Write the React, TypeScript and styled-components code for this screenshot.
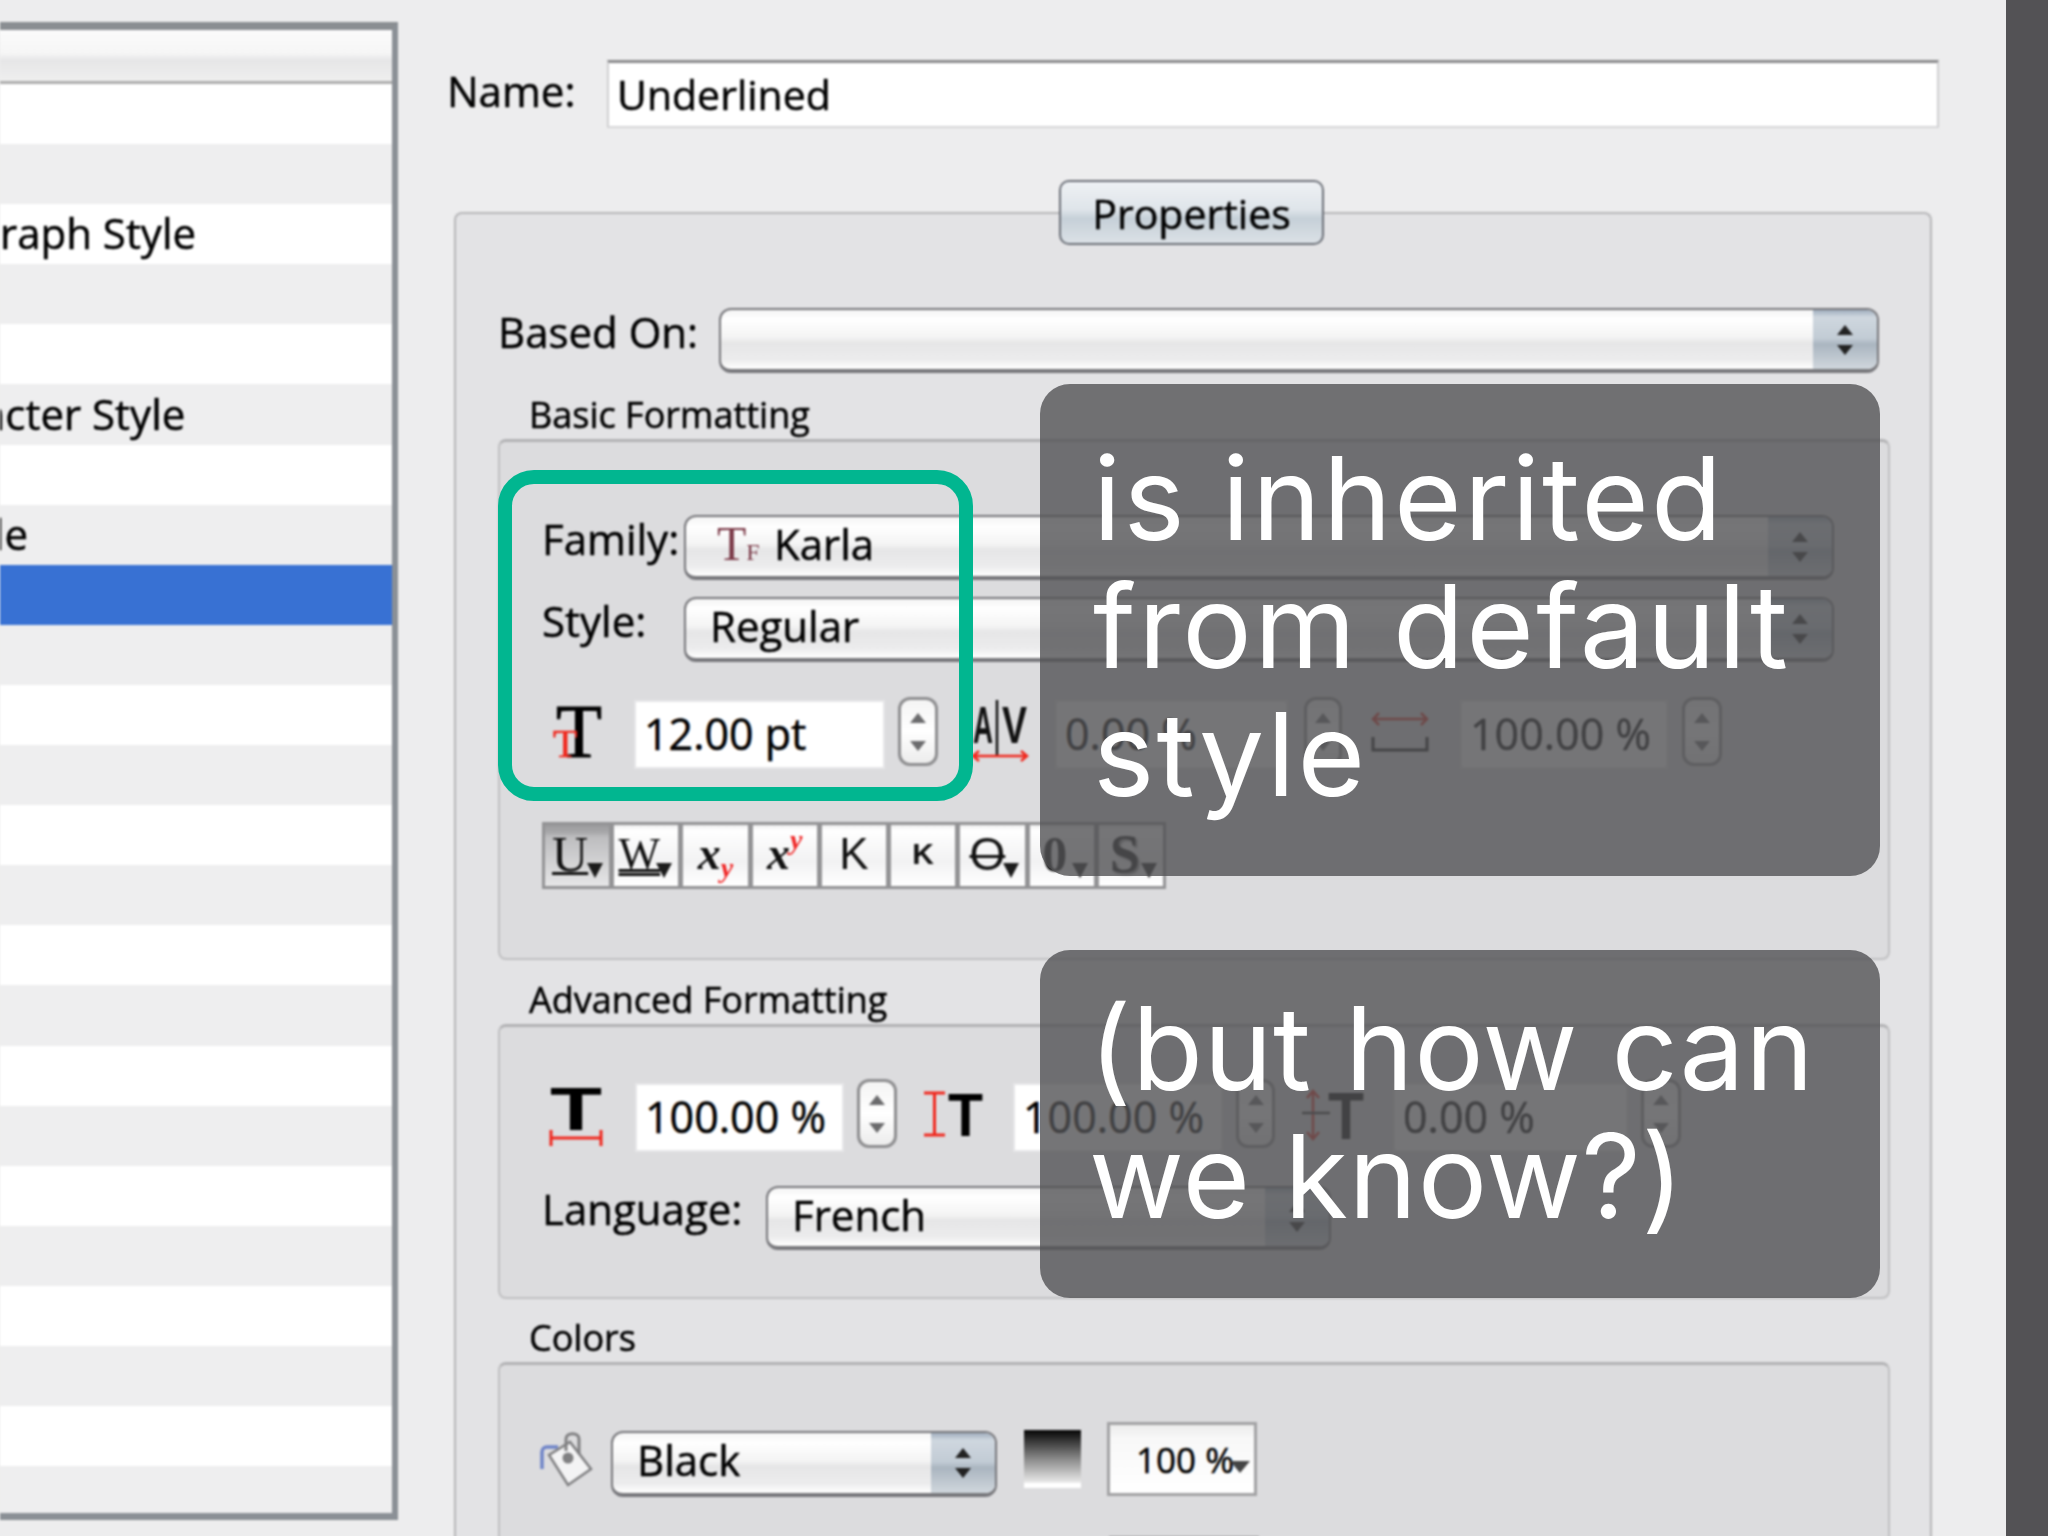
import React from 'react';
import styled, { createGlobalStyle } from 'styled-components';

const GlobalStyle = createGlobalStyle`
    html, body {
        margin: 0;
        padding: 0;
        background: #ededee;
    }
    * {
        box-sizing: border-box;
    }
`;

const Page = styled.div`
    position: relative;
    width: 2048px;
    height: 1536px;
    display: flex;
    overflow: hidden;
    background: #ededee;
    font-family: "Open Sans", "Noto Sans", sans-serif;
    color: #000;
`;

/* left list */

const ListPanel = styled.div`
    width: 398px;
    height: 1498px;
    margin-top: 22px;
    flex-shrink: 0;
    border-top: 8px solid #8a8e92;
    border-right: 6px solid #8b9096;
    border-bottom: 7px solid #8b9096;
    background: #fff;
    overflow: hidden;
    -webkit-text-stroke: 0.5px #000;
    filter: blur(1.1px);
`;

const ListHeader = styled.div`
    height: 54px;
    border-bottom: 3px solid #aeaeae;
    background: linear-gradient(#fbfbfb 0%, #f6f6f6 45%, #e6e6e7 60%, #efefef 100%);
`;

const ListRow = styled.div<{ $selected?: boolean; $odd?: boolean }>`
    height: 60.1px;
    display: flex;
    align-items: center;
    padding-bottom: 3px;
    font-size: 42px;
    white-space: nowrap;
    background: ${(p) => (p.$selected ? '#3871d3' : p.$odd ? '#eeeeef' : '#ffffff')};
`;

const ListText = styled.span<{ $offset?: number }>`
    margin-left: ${(p) => p.$offset ?? 0}px;
`;

/* dialog */

const Dialog = styled.div`
    width: 1608px;
    padding-left: 49px;
    display: flex;
    flex-direction: column;
    flex-shrink: 0;
    -webkit-text-stroke: 0.5px #000;
    filter: blur(1.1px);
`;

const NameRow = styled.div`
    display: flex;
    align-items: center;
    margin-top: 60px;
`;

const Label = styled.div<{ $w: number; $lift?: number }>`
    width: ${(p) => p.$w}px;
    flex-shrink: 0;
    margin-bottom: ${(p) => (p.$lift ?? 9) * 2}px;
    font-size: 42px;
    line-height: 44px;
    white-space: nowrap;
`;

const NameInput = styled.div`
    width: 1332px;
    height: 68px;
    padding: 0 0 2px 8px;
    display: flex;
    align-items: center;
    background: #fff;
    border-top: 3px solid #8b8b8d;
    border-left: 2px solid #cfcfd1;
    border-right: 2px solid #cfcfd1;
    border-bottom: 2px solid #d6d6d8;
    font-size: 41px;
`;

const PropertiesPanel = styled.div`
    width: 1478px;
    margin-top: 84px;
    margin-left: 7px;
    height: 1340px;
    flex-shrink: 0;
    background: #e3e3e5;
    border: 2px solid #b7b7b9;
    border-bottom: 0;
    border-radius: 8px 8px 0 0;
    display: flex;
    flex-direction: column;
`;

const TabRow = styled.div`
    display: flex;
    flex-shrink: 0;
    justify-content: center;
    margin-top: -34px;
    padding-right: 3px;
`;

const TabButton = styled.div`
    width: 265px;
    height: 65px;
    display: flex;
    align-items: center;
    justify-content: center;
    border: 2px solid #6c7078;
    border-radius: 10px;
    background: linear-gradient(#eef1f4 0%, #dfe5ea 45%, #c6d0d8 60%, #dbe1e6 100%);
    font-size: 41px;
`;

const BasedRow = styled.div`
    display: flex;
    flex-shrink: 0;
    align-items: center;
    margin-top: 63px;
    padding-left: 42px;
`;

const SelectBox = styled.div<{ $w: number; $h?: number }>`
    width: ${(p) => p.$w}px;
    height: ${(p) => p.$h ?? 65}px;
    flex-shrink: 0;
    display: flex;
    overflow: hidden;
    border: 2px solid #77777b;
    border-bottom: 4px solid #77777b;
    border-radius: 12px;
    background: linear-gradient(#f4f4f4 0%, #ffffff 16%, #f4f4f4 46%, #e6e6e7 56%, #ececed 84%, #ffffff 100%);
`;

const SelectValue = styled.div<{ $pad: number; $lift: number }>`
    flex: 1;
    display: flex;
    align-items: center;
    padding-left: ${(p) => p.$pad}px;
    padding-bottom: ${(p) => p.$lift}px;
    font-size: 42px;
    white-space: nowrap;
`;

const SelectArrows = styled.div`
    width: 64px;
    display: flex;
    flex-direction: column;
    align-items: center;
    justify-content: center;
    gap: 10px;
    background: linear-gradient(#9fadbd 0%, #cfd7df 12%, #c2ccd5 48%, #aab5c0 58%, #d0d7dd 100%);
`;

const Arrow = styled.span<{ $down?: boolean; $color?: string; $size?: number }>`
    width: 0;
    height: 0;
    flex-shrink: 0;
    border-left: ${(p) => p.$size ?? 8}px solid transparent;
    border-right: ${(p) => p.$size ?? 8}px solid transparent;
    border-${(p) => (p.$down ? 'top' : 'bottom')}: ${(p) => (p.$size ?? 8) + 2}px solid ${(p) => p.$color ?? '#222'};
`;

const SectionLabel = styled.div<{ $mt: number }>`
    height: 45px;
    flex-shrink: 0;
    margin-top: ${(p) => p.$mt}px;
    padding-left: 73px;
    font-size: 36px;
    line-height: 41px;
    white-space: nowrap;
`;

const Group = styled.div<{ $h: number; $pt: number }>`
    width: 1392px;
    height: ${(p) => p.$h}px;
    margin-left: 42px;
    padding-top: ${(p) => p.$pt}px;
    flex-shrink: 0;
    background: #dcdcde;
    border: 2px solid #c0c0c2;
    border-top: 3px solid #b2b2b4;
    border-radius: 8px;
    display: flex;
    flex-direction: column;
`;

const FieldRow = styled.div<{ $mt?: number; $pl?: number }>`
    display: flex;
    flex-shrink: 0;
    align-items: center;
    margin-top: ${(p) => p.$mt ?? 0}px;
    padding-left: ${(p) => p.$pl ?? 42}px;
`;

const MetricRow = styled.div<{ $mt?: number }>`
    display: flex;
    flex-shrink: 0;
    align-items: flex-start;
    margin-top: ${(p) => p.$mt ?? 0}px;
`;

const Slot = styled.div<{ $ml: number; $mt?: number; $w: number; $h: number }>`
    margin-left: ${(p) => p.$ml}px;
    margin-top: ${(p) => p.$mt ?? 0}px;
    width: ${(p) => p.$w}px;
    height: ${(p) => p.$h}px;
    flex-shrink: 0;
    svg {
        display: block;
        overflow: visible;
    }
`;

const NumberInput = styled.div<{ $ml: number; $mt?: number; $w: number }>`
    margin-left: ${(p) => p.$ml}px;
    margin-top: ${(p) => p.$mt ?? 3}px;
    width: ${(p) => p.$w}px;
    height: 69px;
    flex-shrink: 0;
    display: flex;
    align-items: center;
    padding: 0 0 3px 8px;
    background: #fff;
    border: 2px solid #e6e6e8;
    font-size: 43px;
    white-space: nowrap;
`;

const Stepper = styled.div<{ $ml: number; $w?: number }>`
    margin-left: ${(p) => p.$ml}px;
    width: ${(p) => p.$w ?? 40}px;
    height: 69px;
    flex-shrink: 0;
    display: flex;
    flex-direction: column;
    align-items: center;
    justify-content: center;
    gap: 18px;
    border: 3px solid #8e8e90;
    border-radius: 12px;
    background: linear-gradient(#f4f4f4, #ffffff 50%, #ececec);
`;

const Toolbar = styled.div`
    width: 624px;
    height: 67px;
    flex-shrink: 0;
    margin-top: 53px;
    margin-left: 42px;
    display: flex;
    border: 3px solid #939395;
    background: #939395;
    gap: 5px;
`;

const ToolButton = styled.div<{ $active?: boolean }>`
    flex: 1;
    position: relative;
    display: flex;
    align-items: center;
    justify-content: center;
    background: ${(p) =>
        p.$active
            ? 'linear-gradient(#9a9a9c 0%, #a8a8aa 12%, #bdbdbf 20%, #e6e6e7 100%)'
            : 'linear-gradient(#ececec 0%, #ffffff 8%, #f2f2f3 60%, #ffffff 100%)'};
`;

const Glyph = styled.span<{ $size: number; $serif?: boolean; $bold?: boolean; $italic?: boolean; $line?: string; $pos?: number; $shade?: boolean }>`
    position: relative;
    left: ${(p) => p.$pos ?? 0}px;
    top: -2px;
    font-family: ${(p) => (p.$serif ? '"Liberation Serif", serif' : '"Liberation Sans", sans-serif')};
    font-size: ${(p) => p.$size}px;
    line-height: 1;
    font-weight: ${(p) => (p.$bold ? 700 : 400)};
    font-style: ${(p) => (p.$italic ? 'italic' : 'normal')};
    text-decoration: ${(p) => p.$line ?? 'none'};
    text-decoration-thickness: 3px;
    text-underline-offset: 1px;
    text-shadow: ${(p) => (p.$shade ? '2px 2px 2px #777' : 'none')};
    color: #111;
    -webkit-text-stroke: 0;
`;

const RedIndex = styled.sub<{ $up?: boolean }>`
    font-family: "Liberation Serif", serif;
    font-style: italic;
    font-weight: 700;
    font-size: 28px;
    line-height: 0;
    vertical-align: ${(p) => (p.$up ? '20px' : '-8px')};
    color: #f02626;
`;

const CornerArrow = styled.span`
    position: absolute;
    right: 6px;
    bottom: 8px;
    width: 0;
    height: 0;
    border-left: 8px solid transparent;
    border-right: 8px solid transparent;
    border-top: 15px solid #1c1c1c;
`;

const FontMark = styled.span`
    display: inline-flex;
    align-items: baseline;
    width: 57px;
    font-family: "Liberation Serif", serif;
    font-size: 48px;
    color: #7b3a48;
    -webkit-text-stroke: 0;
    small {
        font-size: 24px;
    }
`;

const Swatch = styled.div`
    width: 57px;
    height: 58px;
    margin-left: 27px;
    flex-shrink: 0;
    background: linear-gradient(#050505 0%, #8a8a8a 50%, #e8e8e8 90%, #ffffff 92%);
`;

const PercentBox = styled.div`
    width: 150px;
    height: 74px;
    margin-left: 26px;
    flex-shrink: 0;
    display: flex;
    align-items: center;
    padding-left: 26px;
    border: 3px solid #a2a2a4;
    background: linear-gradient(#ececec 0%, #f8f8f8 20%, #ffffff 100%);
    font-size: 35px;
    white-space: nowrap;
    span:last-child {
        margin-left: -4px;
        margin-top: 16px;
    }
`;

const NextBox = styled.div`
    width: 150px;
    height: 40px;
    margin-top: 39px;
    margin-left: 609px;
    flex-shrink: 0;
    border: 3px solid #a2a2a4;
    background: #f4f4f4;
`;

const DarkBar = styled.div`
    width: 42px;
    flex-shrink: 0;
    background: #535255;
`;

/* annotation layer */

const Highlight = styled.div`
    position: absolute;
    left: 498px;
    top: 470px;
    width: 475px;
    height: 331px;
    border: 14px solid #01b690;
    border-radius: 36px;
`;

const Note = styled.div<{ $top: number; $h: number; $pt: number; $pl: number; $ls: number }>`
    position: absolute;
    left: 1040px;
    top: ${(p) => p.$top}px;
    width: 840px;
    height: ${(p) => p.$h}px;
    padding: ${(p) => p.$pt}px 0 0 ${(p) => p.$pl}px;
    border-radius: 30px;
    background: rgba(83, 82, 85, 0.8);
    color: #fff;
    font-family: "Inter", "Liberation Sans", sans-serif;
    font-weight: 400;
    font-size: 116px;
    line-height: 128px;
    letter-spacing: ${(p) => p.$ls}px;
    white-space: nowrap;
`;

function SizeIcon() {
    return (
        <svg width="50" height="56" viewBox="0 0 50 56">
            <text x="3" y="54" fontFamily="Liberation Serif" fontSize="76" textLength="46" lengthAdjust="spacingAndGlyphs" fill="#000" stroke="#000" strokeWidth="1">T</text>
            <text x="0" y="54" fontFamily="Liberation Serif" fontSize="40" fill="#f0281e" stroke="#f0281e" strokeWidth="0.6">T</text>
        </svg>
    );
}

function KerningIcon() {
    return (
        <svg width="56" height="62" viewBox="0 0 56 62">
            <text x="1" y="43" fontFamily="Liberation Sans" fontWeight="700" fontSize="52" textLength="20" lengthAdjust="spacingAndGlyphs" fill="#111">A</text>
            <text x="30" y="43" fontFamily="Liberation Sans" fontWeight="700" fontSize="52" textLength="25" lengthAdjust="spacingAndGlyphs" fill="#111">V</text>
            <path d="M25 0V55" stroke="#111" strokeWidth="2.5" />
            <path d="M1 56H55M49 51l6 5-6 5M7 51l-6 5 6 5" stroke="#f0281e" strokeWidth="2.5" fill="none" />
        </svg>
    );
}

function TrackingIcon() {
    return (
        <svg width="60" height="50" viewBox="0 0 60 50">
            <path d="M3 13H57M51 7l6 6-6 6M9 7l-6 6 6 6" stroke="#d8281e" strokeWidth="2.5" fill="none" />
            <path d="M3 31V44H57V31" stroke="#111" strokeWidth="3" fill="none" />
        </svg>
    );
}

function HorizontalScaleIcon() {
    return (
        <svg width="52" height="61" viewBox="0 0 52 61">
            <text x="0" y="45" fontFamily="Liberation Sans" fontWeight="700" fontSize="62" textLength="52" lengthAdjust="spacingAndGlyphs" fill="#000">T</text>
            <path d="M1 45V61M51 45V61M1 53H51" stroke="#f0281e" strokeWidth="3" fill="none" />
        </svg>
    );
}

function VerticalScaleIcon() {
    return (
        <svg width="60" height="46" viewBox="0 0 60 46">
            <path d="M1 2H22M1 44H22M11.5 2V44" stroke="#f0281e" strokeWidth="3" fill="none" />
            <text x="25" y="45" fontFamily="Liberation Sans" fontWeight="700" fontSize="62" textLength="35" lengthAdjust="spacingAndGlyphs" fill="#000">T</text>
        </svg>
    );
}

function LeadingIcon() {
    return (
        <svg width="62" height="52" viewBox="0 0 62 52">
            <path d="M11 2V50M5 9l6-7 6 7M5 43l6 7 6-7" stroke="#e0281e" strokeWidth="2.5" fill="none" />
            <path d="M0 24H28" stroke="#333" strokeWidth="2.5" />
            <text x="26" y="50" fontFamily="Liberation Sans" fontWeight="700" fontSize="66" textLength="36" lengthAdjust="spacingAndGlyphs" fill="#000">T</text>
        </svg>
    );
}

function PaintIcon() {
    return (
        <svg width="52" height="52" viewBox="0 0 52 52">
            <path d="M2 36V19c0-3 2-5 5-5h11" stroke="#6f84c8" strokeWidth="3.5" fill="none" />
            <path d="M9 22L30 9 51 36 28 52Z" fill="#f3f3f4" stroke="#808082" strokeWidth="2.5" />
            <path d="M26 18V6c0-7 13-7 13 0v15" stroke="#808082" strokeWidth="3" fill="none" />
            <circle cx="28" cy="25" r="5.5" fill="#808082" />
        </svg>
    );
}

function SpinButtons({ ml, w }: { ml: number; w?: number }) {
    return (
        <Stepper $ml={ml} $w={w}>
            <Arrow $color="#6b6b6d" />
            <Arrow $down $color="#6b6b6d" />
        </Stepper>
    );
}

function Select({ w, h, pad = 24, lift = 6, children }: { w: number; h?: number; pad?: number; lift?: number; children?: React.ReactNode }) {
    return (
        <SelectBox $w={w} $h={h}>
            <SelectValue $pad={pad} $lift={lift}>{children}</SelectValue>
            <SelectArrows>
                <Arrow />
                <Arrow $down />
            </SelectArrows>
        </SelectBox>
    );
}

const listRows = Array.from({ length: 24 }, (_, i) => i);
const listText: Record<number, { text: string; offset: number }> = {
    2: { text: 'raph Style', offset: 0 },
    5: { text: 'acter Style', offset: -18 },
    7: { text: 'le', offset: -6 },
};

export default function App() {
    return (
        <Page>
            <GlobalStyle />
            <ListPanel>
                <ListHeader />
                {listRows.map((i) => (
                    <ListRow key={i} $odd={i % 2 === 1} $selected={i === 8}>
                        <ListText $offset={listText[i]?.offset}>{listText[i]?.text}</ListText>
                    </ListRow>
                ))}
            </ListPanel>

            <Dialog>
                <NameRow>
                    <Label $w={160} $lift={3}>Name:</Label>
                    <NameInput>Underlined</NameInput>
                </NameRow>

                <PropertiesPanel>
                    <TabRow>
                        <TabButton>Properties</TabButton>
                    </TabRow>

                    <BasedRow>
                        <Label $w={221}>Based On:</Label>
                        <Select w={1160} />
                    </BasedRow>

                    <SectionLabel $mt={21}>Basic Formatting</SectionLabel>
                    <Group $h={521} $pt={73}>
                        <FieldRow>
                            <Label $w={142}>Family:</Label>
                            <Select w={1150} pad={31}>
                                <FontMark>T<small>F</small></FontMark>
                                Karla
                            </Select>
                        </FieldRow>
                        <FieldRow $mt={17}>
                            <Label $w={142}>Style:</Label>
                            <Select w={1150} pad={24}>Regular</Select>
                        </FieldRow>
                        <MetricRow $mt={35}>
                            <Slot $ml={53} $mt={6} $w={50} $h={56}><SizeIcon /></Slot>
                            <NumberInput $ml={31} $w={251}>12.00 pt</NumberInput>
                            <SpinButtons ml={13} />
                            <Slot $ml={34} $mt={3} $w={56} $h={62}><KerningIcon /></Slot>
                            <NumberInput $ml={27} $w={233}>0.00 %</NumberInput>
                            <SpinButtons ml={16} w={38} />
                            <Slot $ml={28} $mt={9} $w={60} $h={50}><TrackingIcon /></Slot>
                            <NumberInput $ml={30} $w={208}>100.00 %</NumberInput>
                            <SpinButtons ml={14} />
                        </MetricRow>
                        <Toolbar>
                            <ToolButton $active>
                                <Glyph $size={50} $serif $line="underline" $pos={-7}>U</Glyph>
                                <CornerArrow />
                            </ToolButton>
                            <ToolButton>
                                <Glyph $size={44} $serif $line="underline double" $pos={-7}>W</Glyph>
                                <CornerArrow />
                            </ToolButton>
                            <ToolButton>
                                <Glyph $size={46} $serif $bold $italic>x<RedIndex>y</RedIndex></Glyph>
                            </ToolButton>
                            <ToolButton>
                                <Glyph $size={46} $serif $bold $italic>x<RedIndex $up>y</RedIndex></Glyph>
                            </ToolButton>
                            <ToolButton>
                                <Glyph $size={44}>K</Glyph>
                            </ToolButton>
                            <ToolButton>
                                <Glyph $size={30} $bold>K</Glyph>
                            </ToolButton>
                            <ToolButton>
                                <Glyph $size={46} $line="line-through" $pos={-5}>O</Glyph>
                                <CornerArrow />
                            </ToolButton>
                            <ToolButton>
                                <Glyph $size={50} $serif $bold $pos={-7}>0</Glyph>
                                <CornerArrow />
                            </ToolButton>
                            <ToolButton>
                                <Glyph $size={54} $serif $bold $shade $pos={-6}>S</Glyph>
                                <CornerArrow />
                            </ToolButton>
                        </Toolbar>
                    </Group>

                    <SectionLabel $mt={19}>Advanced Formatting</SectionLabel>
                    <Group $h={275} $pt={52}>
                        <MetricRow>
                            <Slot $ml={50} $mt={6} $w={52} $h={61}><HorizontalScaleIcon /></Slot>
                            <NumberInput $ml={33} $mt={4} $w={209}>100.00 %</NumberInput>
                            <SpinButtons ml={13} />
                            <Slot $ml={26} $mt={12} $w={60} $h={46}><VerticalScaleIcon /></Slot>
                            <NumberInput $ml={30} $mt={4} $w={210}>100.00 %</NumberInput>
                            <SpinButtons ml={13} w={39} />
                            <Slot $ml={27} $mt={10} $w={62} $h={52}><LeadingIcon /></Slot>
                            <NumberInput $ml={29} $mt={4} $w={235}>0.00 %</NumberInput>
                            <SpinButtons ml={13} />
                        </MetricRow>
                        <FieldRow $mt={34}>
                            <Label $w={224}>Language:</Label>
                            <Select w={565} h={64}>French</Select>
                        </FieldRow>
                    </Group>

                    <SectionLabel $mt={18}>Colors</SectionLabel>
                    <Group $h={300} $pt={56}>
                        <FieldRow $pl={40}>
                            <Slot $ml={0} $w={52} $h={52}><PaintIcon /></Slot>
                            <Slot $ml={19} $mt={10} $w={386} $h={66}>
                                <Select w={386} h={66} lift={8}>Black</Select>
                            </Slot>
                            <Swatch />
                            <PercentBox>
                                <span>100 %</span>
                                <Arrow $down $color="#444" $size={10} />
                            </PercentBox>
                        </FieldRow>
                        <NextBox />
                    </Group>
                </PropertiesPanel>
            </Dialog>

            <DarkBar />

            <Highlight />
            <Note $top={384} $h={492} $pt={50} $pl={53} $ls={2.3}>
                is inherited<br />from default<br />style
            </Note>
            <Note $top={950} $h={348} $pt={34} $pl={49} $ls={0.7}>
                (but how can<br />we know?)
            </Note>
        </Page>
    );
}
